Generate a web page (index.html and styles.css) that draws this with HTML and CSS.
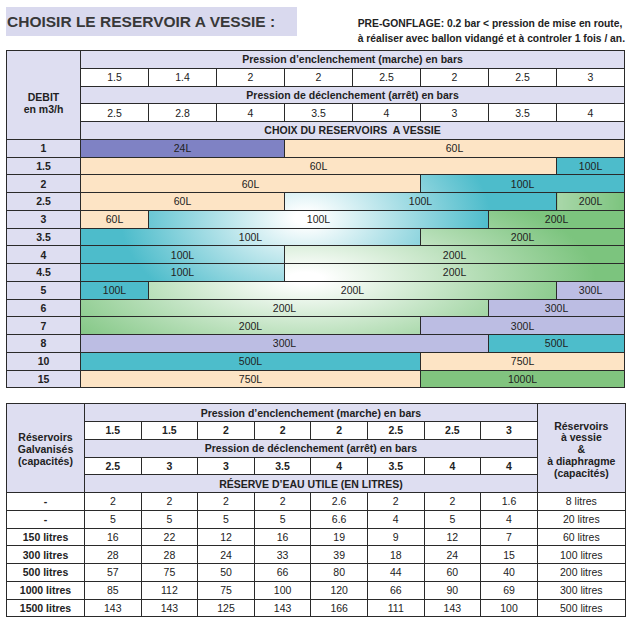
FILE: index.html
```html
<!DOCTYPE html>
<html lang="fr">
<head>
<meta charset="utf-8">
<title>Choisir le réservoir à vessie</title>
<link rel="stylesheet" href="styles.css">
</head>
<body>
<div class="page">
  <div class="top">
    <div class="title">CHOISIR LE RESERVOIR A VESSIE :</div>
    <div class="note">PRE-GONFLAGE: 0.2 bar &lt; pression de mise en route,<br>à réaliser avec ballon vidangé et à controler 1 fois / an.</div>
  </div>

  <table class="grid t1">
    <colgroup><col class="w-side1"><col span="8" class="w-v1"></colgroup>
    <tr><th rowspan="5" class="side debit">DEBIT<br>en m3/h</th><th colspan="8" class="hd">Pression d’enclenchement (marche) en bars</th></tr>
    <tr class="vals"><td>1.5</td><td>1.4</td><td>2</td><td>2</td><td>2.5</td><td>2</td><td>2.5</td><td>3</td></tr>
    <tr><th colspan="8" class="hd">Pression de déclenchement (arrêt) en bars</th></tr>
    <tr class="vals"><td>2.5</td><td>2.8</td><td>4</td><td>3.5</td><td>4</td><td>3</td><td>3.5</td><td>4</td></tr>
    <tr><th colspan="8" class="hd">CHOIX DU RESERVOIRS&nbsp; A VESSIE</th></tr>
    <tr><th class="side">1</th><td colspan="3" class="c24">24L</td><td colspan="5" class="c60">60L</td></tr>
    <tr><th class="side">1.5</th><td colspan="7" class="c60">60L</td><td class="c100">100L</td></tr>
    <tr><th class="side">2</th><td colspan="5" class="c60">60L</td><td colspan="3" class="c100">100L</td></tr>
    <tr><th class="side">2.5</th><td colspan="3" class="c60">60L</td><td colspan="4" class="c100">100L</td><td class="c200 c200-edge">200L</td></tr>
    <tr><th class="side">3</th><td class="c60">60L</td><td colspan="5" class="c100">100L</td><td colspan="2" class="c200">200L</td></tr>
    <tr><th class="side">3.5</th><td colspan="5" class="c100">100L</td><td colspan="3" class="c200">200L</td></tr>
    <tr><th class="side">4</th><td colspan="3" class="c100">100L</td><td colspan="5" class="c200">200L</td></tr>
    <tr><th class="side">4.5</th><td colspan="3" class="c100">100L</td><td colspan="5" class="c200">200L</td></tr>
    <tr><th class="side">5</th><td class="c100">100L</td><td colspan="6" class="c200">200L</td><td class="c300">300L</td></tr>
    <tr><th class="side">6</th><td colspan="6" class="c200">200L</td><td colspan="2" class="c300">300L</td></tr>
    <tr><th class="side">7</th><td colspan="5" class="c200">200L</td><td colspan="3" class="c300">300L</td></tr>
    <tr><th class="side">8</th><td colspan="6" class="c300">300L</td><td colspan="2" class="c500">500L</td></tr>
    <tr><th class="side">10</th><td colspan="5" class="c500">500L</td><td colspan="3" class="c750">750L</td></tr>
    <tr><th class="side">15</th><td colspan="5" class="c750">750L</td><td colspan="3" class="c1000">1000L</td></tr>
  </table>

  <table class="grid t2">
    <colgroup><col class="w-side2"><col span="8" class="w-v2"><col class="w-right2"></colgroup>
    <tr><th rowspan="5" class="side lbl">Réservoirs<br>Galvanisés<br>(capacités)</th><th colspan="8" class="hd">Pression d’enclenchement (marche) en bars</th><th rowspan="5" class="side lbl">Réservoirs<br>à vessie<br>&amp;<br>à diaphragme<br>(capacités)</th></tr>
    <tr class="vals bold"><td>1.5</td><td>1.5</td><td>2</td><td>2</td><td>2</td><td>2.5</td><td>2.5</td><td>3</td></tr>
    <tr><th colspan="8" class="hd">Pression de déclenchement (arrêt) en bars</th></tr>
    <tr class="vals bold"><td>2.5</td><td>3</td><td>3</td><td>3.5</td><td>4</td><td>3.5</td><td>4</td><td>4</td></tr>
    <tr><th colspan="8" class="hd">RÉSERVE D’EAU UTILE (EN LITRES)</th></tr>
    <tr><th class="rowlbl">-</th><td>2</td><td>2</td><td>2</td><td>2</td><td>2.6</td><td>2</td><td>2</td><td>1.6</td><td>8 litres</td></tr>
    <tr><th class="rowlbl">-</th><td>5</td><td>5</td><td>5</td><td>5</td><td>6.6</td><td>4</td><td>5</td><td>4</td><td>20 litres</td></tr>
    <tr><th class="rowlbl">150 litres</th><td>16</td><td>22</td><td>12</td><td>16</td><td>19</td><td>9</td><td>12</td><td>7</td><td>60 litres</td></tr>
    <tr><th class="rowlbl">300 litres</th><td>28</td><td>28</td><td>24</td><td>33</td><td>39</td><td>18</td><td>24</td><td>15</td><td>100 litres</td></tr>
    <tr><th class="rowlbl">500 litres</th><td>57</td><td>75</td><td>50</td><td>66</td><td>80</td><td>44</td><td>60</td><td>40</td><td>200 litres</td></tr>
    <tr><th class="rowlbl">1000 litres</th><td>85</td><td>112</td><td>75</td><td>100</td><td>120</td><td>66</td><td>90</td><td>69</td><td>300 litres</td></tr>
    <tr><th class="rowlbl">1500 litres</th><td>143</td><td>143</td><td>125</td><td>143</td><td>166</td><td>111</td><td>143</td><td>100</td><td>500 litres</td></tr>
  </table>
</div>
</body>
</html>
```

FILE: styles.css
```css
body {
  margin: 0;
  background: #ffffff;
  color: #222222;
  font-family: "Liberation Sans", Arial, sans-serif;
}

.page {
  padding: 7px 0 0 6px;
  width: 619px;
}

.top {
  display: flex;
  justify-content: space-between;
  align-items: flex-start;
  height: 43px;
}

.title {
  width: 291px;
  height: 29px;
  box-sizing: border-box;
  padding-left: 1px;
  background: #d9d9ee;
  color: #383838;
  font-size: 15.5px;
  font-weight: bold;
  line-height: 30px;
  white-space: nowrap;
}

.note {
  margin-top: 9px;
  font-size: 10.3px;
  font-weight: bold;
  line-height: 15px;
  color: #222222;
  white-space: nowrap;
}

.grid {
  border-collapse: collapse;
  table-layout: fixed;
  width: 619px;
  font-size: 10.5px;
}

.grid tr {
  height: 17.75px;
}

.grid td,
.grid th {
  border: 1px solid #2a2a2a;
  padding: 0;
  text-align: center;
  vertical-align: middle;
  line-height: 12px;
  white-space: nowrap;
  overflow: hidden;
}

.grid th {
  font-weight: bold;
}

.grid td {
  font-weight: normal;
}

.w-side1 { width: 74px; }
.w-v1 { width: 68px; }
.w-side2 { width: 78px; }
.w-v2 { width: 56.6px; }
.w-right2 { width: 88px; }

.hd,
.side {
  background: #dedef1;
}

.grid .debit {
  padding-top: 16px;
  line-height: 12px;
}

.grid .lbl {
  line-height: 11.8px;
  padding-top: 4px;
}

.vals td {
  background: #ffffff;
}

.vals.bold td {
  font-weight: bold;
}

.rowlbl {
  background: #ffffff;
}

.t2 {
  margin-top: 15px;
}

/* reservoir bars */
.c24 { background: #7f82c4; }
.c60,
.c750 { background: #fde4c5; }
.c300 { background: #bcbde3; }
.c500 { background: #4dbdcb; }
.c1000 { background: #81c47f; }

.c100 {
  background: radial-gradient(185px 110px at 305px 218px, #ffffff 6%, #4dbccb 100%) fixed;
}

.c200 {
  background: radial-gradient(290px 105px at 305px 278px, #ffffff 6%, #7cc47e 100%) fixed;
}

.grid .c200-edge {
  background: linear-gradient(90deg, #a9d7a9, #7cc47e);
}
```
